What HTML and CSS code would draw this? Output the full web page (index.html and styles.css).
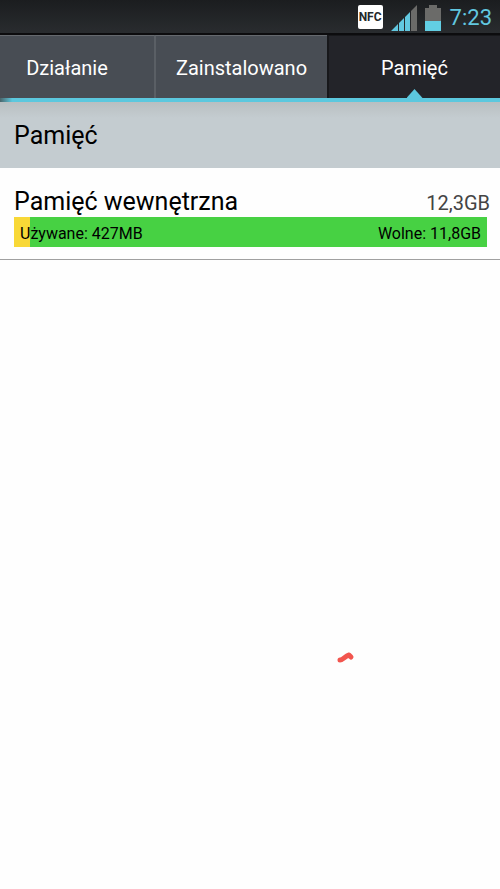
FILE: index.html
```html
<!DOCTYPE html>
<html lang="pl">
<head>
<meta charset="utf-8">
<meta name="viewport" content="width=device-width, initial-scale=1">
<title>Pamięć</title>
<link rel="stylesheet" href="styles.css">
</head>
<body>
<header class="status">
  <span class="nfc"><span>NFC</span></span>
  <svg class="signal" width="26" height="26" viewBox="0 0 26 26" aria-hidden="true">
    <path fill="#62c8e0" d="M0 26L7 19V26ZM8 18L13 13V26H8ZM14 12L19 7V26H14Z"/>
    <path fill="#6b6b69" d="M20 6L26 0V26H20Z"/>
  </svg>
  <svg class="battery" width="16" height="26" viewBox="0 0 16 26" aria-hidden="true">
    <path fill="#6b6b69" d="M4 0H12V3H16V16H0V3H4Z"/>
    <path fill="#62cfe4" d="M0 16H16V26H0Z"/>
  </svg>
  <time class="clock">7:23</time>
</header>
<nav class="tabs">
  <button class="tab tab-cut" type="button">Działanie</button>
  <button class="tab" type="button">Zainstalowano</button>
  <button class="tab tab-active" type="button" aria-current="page">Pamięć</button>
</nav>
<main>
  <h1 class="section">Pamięć</h1>
  <section class="storage">
    <div class="summary">
      <h2 class="name">Pamięć wewnętrzna</h2>
      <span class="total">12,3GB</span>
    </div>
    <div class="usage">
      <span>Używane: 427MB</span>
      <span>Wolne: 11,8GB</span>
    </div>
  </section>
</main>
<svg class="mark" width="18" height="12" viewBox="0 0 18 12" aria-hidden="true">
  <path d="M3 9C6 9 8 5 12 4L14 6" fill="none" stroke="#f2554e" stroke-width="5" stroke-linecap="round" stroke-linejoin="round"/>
</svg>
</body>
</html>
```
FILE: styles.css
```css
* {
  box-sizing: border-box;
}

body {
  position: relative;
  min-height: 100vh;
  margin: 0;
  background: #fefefe;
  color: #000;
  font-family: Roboto, "Noto Sans", sans-serif;
}

.status {
  display: flex;
  justify-content: flex-end;
  align-items: center;
  height: 35px;
  padding: 0 8px 0 0;
  border-bottom: 2px solid #0c0c0e;
  background: linear-gradient(#1b1d1f, #292c2f);
}

.nfc {
  display: flex;
  justify-content: center;
  align-items: center;
  width: 25px;
  height: 24px;
  margin-right: 8px;
  border-radius: 2px;
  background: #fff;
  color: #25282b;
  font-size: 12px;
  font-weight: 700;
}

.signal {
  margin: 3px 8px 0 0;
}

.battery {
  margin: 3px 9px 0 0;
}

.clock {
  padding-top: 2px;
  color: #62c8e0;
  font-size: 22px;
  line-height: 32px;
}

.tabs {
  display: grid;
  grid-template-columns: 154fr 173fr 173fr;
  height: 67px;
  border-bottom: 4px solid #5cc8de;
  background: #484d54;
  border-image: linear-gradient(90deg, #444, #5cc8de 16px) 4;
}

.tab {
  position: relative;
  min-width: 0;
  padding: 2px 0 0;
  border: 0;
  border-top: 1px solid #65696e;
  border-left: 2px solid #5a5f65;
  background: #484d54;
  color: #fff;
  font: inherit;
  font-size: 20px;
}

.tab-cut {
  padding-right: 20px;
  border-left: 0;
}

.tab-active {
  border-color: #17181b;
  background: #232429;
}

.tab-active::after {
  content: "";
  position: absolute;
  bottom: 0;
  left: 50%;
  width: 16px;
  height: 9px;
  margin-left: -8px;
  background: #5cc8de;
  clip-path: polygon(50% 0, 100% 100%, 0 100%);
}

.section {
  margin: 0;
  padding: 18px 14px 16px;
  background: linear-gradient(#b9bfc1, #c4ccd0 16px);
  font-size: 25px;
  font-weight: 400;
  line-height: 32px;
}

.storage {
  padding: 18px 13px 12px 14px;
  border-bottom: 1px solid #a0a0a0;
}

.summary {
  display: flex;
  justify-content: space-between;
  align-items: baseline;
  height: 31px;
  margin-right: -3px;
}

.name {
  margin: 0;
  font-size: 25px;
  font-weight: 400;
  line-height: 32px;
}

.total {
  color: #444;
  font-size: 20px;
}

.usage {
  display: flex;
  justify-content: space-between;
  padding: 3px 6px 0;
  background: linear-gradient(90deg, #f8d837 16px, #47d143 16px);
  font-size: 16px;
  line-height: 27px;
}

.mark {
  position: absolute;
  top: 651px;
  left: 337px;
}
```
